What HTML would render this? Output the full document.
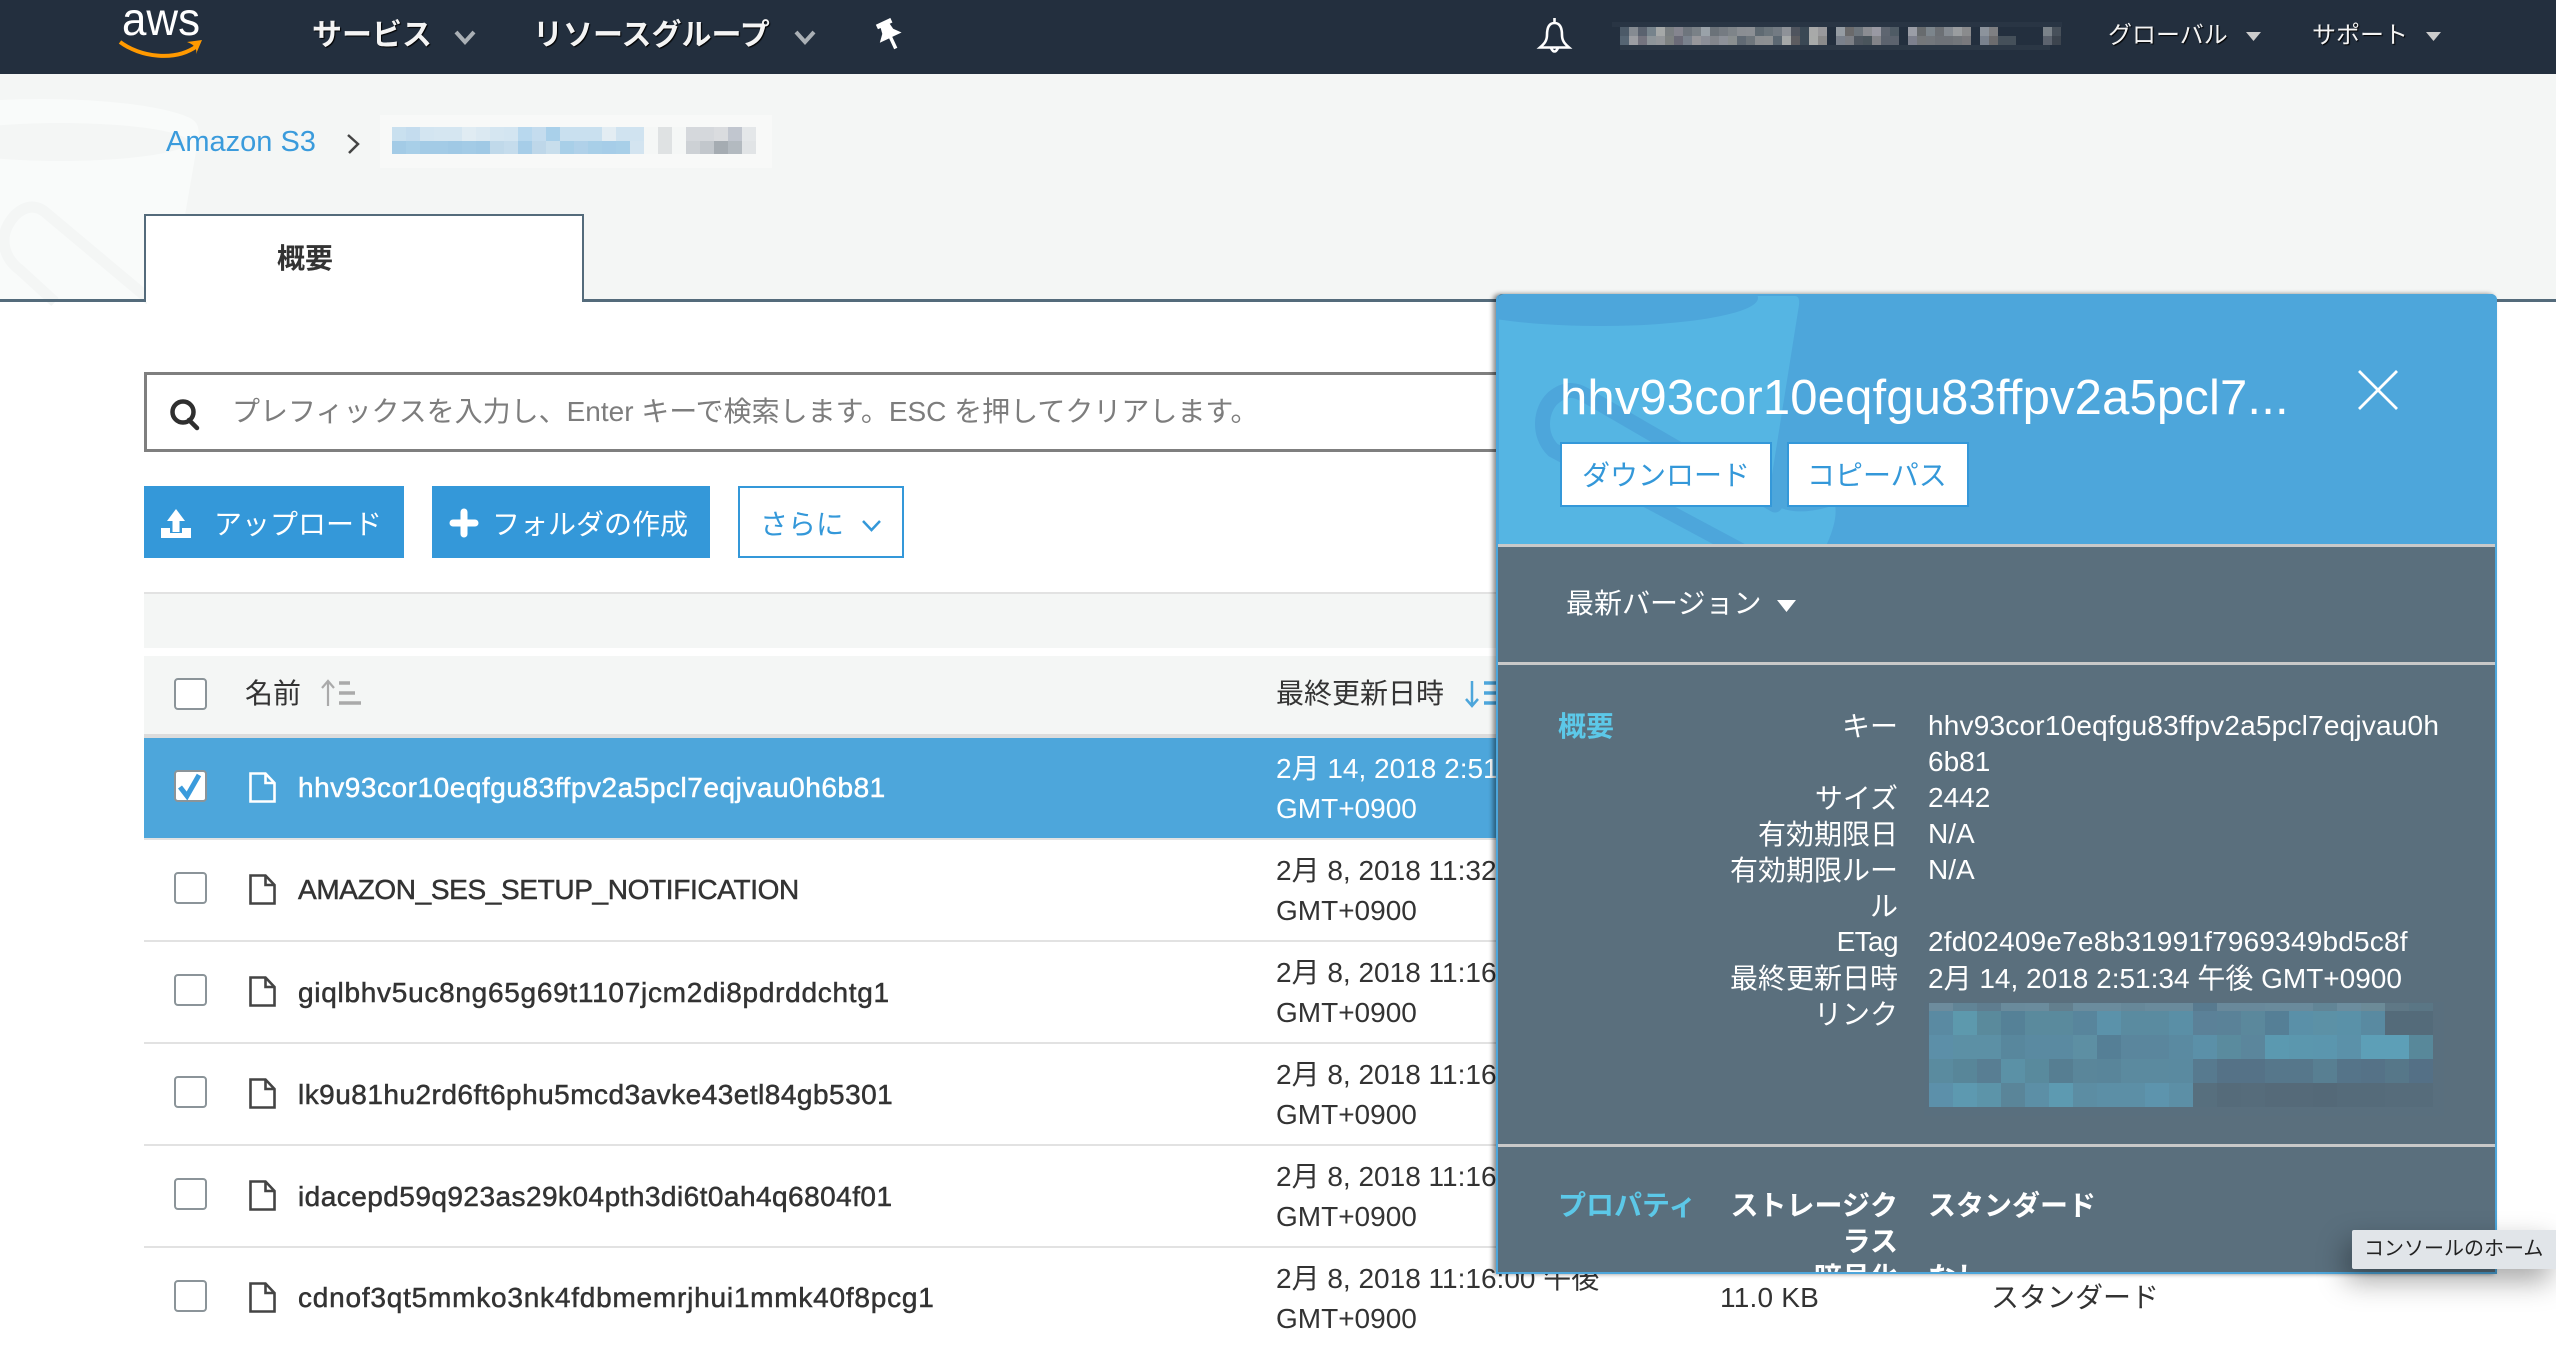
<!DOCTYPE html>
<html lang="ja"><head><meta charset="utf-8"><title>Amazon S3</title>
<style>
*{box-sizing:border-box}
html,body{margin:0;padding:0;width:2556px;height:1348px;overflow:hidden;background:#fff}
body{position:relative;font-family:"Liberation Sans","Noto Sans CJK JP",sans-serif;font-size:28px;color:#333}
.t{position:absolute;white-space:nowrap;line-height:40px;height:40px}
.b{position:absolute}
.nav{font-weight:700;font-size:30px;color:#f4f4f4;text-shadow:1px 1px 1px #000}
.nav2{font-size:24px;color:#f4f4f4;text-shadow:1px 1px 1px #000}
.fn{color:#333;-webkit-text-stroke:.5px #333}
.cb{position:absolute;left:174px;width:33px;height:32px;border:2.5px solid #8b9499;border-radius:4px;background:#fff}
.line{position:absolute;left:144px;width:1360px;height:2px;background:#e2e2e2}
.lb{position:absolute;right:658px;text-align:right;white-space:nowrap;line-height:40px;height:40px;color:#fff}
.v{position:absolute;left:1928px;white-space:nowrap;line-height:40px;height:40px;color:#fff}
.px{position:absolute;display:flex}
.px i{display:block;flex:none;height:100%}
.a i{width:9px}.l i{width:24px}.c i{width:14px}
svg{position:absolute;overflow:visible}
</style></head><body>

<!-- background bar -->
<div class="b" style="left:0;top:74px;width:2556px;height:228px;background:#f4f6f5"></div>
<svg style="left:0;top:0" width="600" height="302">
<path d="M0 100 C80 96 160 104 190 118 C200 123 199 132 198 140 L170 302 H0Z" fill="#f9fbfa"/>
<ellipse cx="60" cy="142" rx="128" ry="19" fill="#f4f6f5"/>
<path d="M150 300 L45 212 C30 200 15 212 8 225 C0 240 4 258 20 270 L55 302" fill="none" stroke="#f4f6f5" stroke-width="11"/>
</svg>

<!-- header -->
<div class="b" style="left:0;top:0;width:2556px;height:74px;background:#232f3e"></div>
<svg style="left:0;top:0" width="2556" height="74">
<text x="122" y="35" font-family="Liberation Sans" font-size="46" fill="#fff" textLength="78" lengthAdjust="spacingAndGlyphs">aws</text>
<path d="M120 42 C140 57 175 62 197 46" fill="none" stroke="#f90" stroke-width="4"/>
<path d="M187 42 L202 40 L196 54 Q198 46 187 42Z" fill="#f90"/>
<path d="M456 32 L465 42 L474 32" fill="none" stroke="#aab0b5" stroke-width="4"/>
<path d="M796 32 L805 42 L814 32" fill="none" stroke="#aab0b5" stroke-width="4"/>
<g transform="rotate(-25 889 34)"><path d="M881 20H897V25H894L895 31L901 38H877L883 31L884 25H881Z" fill="#fff"/><path d="M889 36V50" stroke="#fff" stroke-width="3.500"/></g>
<path d="M1554.5 23C1548.500 23 1547 29 1547 35C1547 41 1544 44 1540 47.500H1569C1565 44 1562 41 1562 35C1562 29 1560.500 23 1554.500 23ZM1554.500 18V23M1551 48Q1554.500 55 1558 48" fill="none" stroke="#fff" stroke-width="2.600"/>
<path d="M2246 32H2261L2253.500 41Z" fill="#ccc"/>
<path d="M2426 32H2441L2433.500 41Z" fill="#ccc"/>
</svg>
<div class="t nav" style="left:312px;top:16px">サービス</div>
<div class="t nav" style="left:533px;top:16px">リソースグループ</div>
<div class="t nav2" style="left:2108px;top:16px">グローバル</div>
<div class="t nav2" style="left:2312px;top:16px">サポート</div>

<!-- account blur -->
<div class="b" style="left:1612px;top:22px;width:450px;height:5px;background:#293544"></div>
<div class="b" style="left:1620px;top:45px;width:430px;height:5px;background:#2b3745"></div>
<div class="px a" style="left:1620px;top:27px;height:9px"><i style="background:#4c5a68"></i><i style="background:#858b92"></i><i style="background:#5a626f"></i><i style="background:#76838c"></i><i style="background:#a5a8a8"></i><i style="background:#7a7f82"></i><i style="background:#85858f"></i><i style="background:#6e757d"></i><i style="background:#7a8187"></i><i style="background:#9aa2a9"></i><i style="background:#6b7279"></i><i style="background:#757b82"></i><i style="background:#7e8489"></i><i style="background:#8a8e93"></i><i style="background:#8b8f94"></i><i style="background:#5f6a72"></i><i style="background:#6a747b"></i><i style="background:#737b83"></i><i style="background:#8e9298"></i><i style="background:#4f545e"></i><i style="background:#3a4854"></i><i style="background:#a8a9a9"></i><i style="background:#99999c"></i><i style="background:#232f3e"></i><i style="background:#959ca3"></i><i style="background:#6a6a6b"></i><i style="background:#6d757c"></i><i style="background:#8b8d92"></i><i style="background:#9999a3"></i><i style="background:#5e6570"></i><i style="background:#4f5b65"></i><i style="background:#232f3e"></i><i style="background:#9a9da6"></i><i style="background:#676b6e"></i><i style="background:#7c858c"></i><i style="background:#6c7075"></i><i style="background:#858b92"></i><i style="background:#9a9da0"></i><i style="background:#8a8b8d"></i><i style="background:#232f3e"></i><i style="background:#8c939c"></i><i style="background:#7e7f82"></i><i style="background:#232f3e;width:45px"></i><i style="background:#7a8289"></i><i style="background:#47505a"></i></div>
<div class="px a" style="left:1620px;top:36px;height:9px"><i style="background:#566573"></i><i style="background:#9c9ea3"></i><i style="background:#74747f"></i><i style="background:#8e959a"></i><i style="background:#94979b"></i><i style="background:#7e8282"></i><i style="background:#6b6b78"></i><i style="background:#7a828d"></i><i style="background:#97979b"></i><i style="background:#8b8e97"></i><i style="background:#83868c"></i><i style="background:#8d9199"></i><i style="background:#8a8f90"></i><i style="background:#606a74"></i><i style="background:#6e767c"></i><i style="background:#8c8f92"></i><i style="background:#8d9092"></i><i style="background:#5c6872"></i><i style="background:#a5a8a8"></i><i style="background:#5c5c60"></i><i style="background:#3a4854"></i><i style="background:#a8aaa9"></i><i style="background:#8b8b8b"></i><i style="background:#232f3e"></i><i style="background:#7a818c"></i><i style="background:#7c7f85"></i><i style="background:#4f5760"></i><i style="background:#4a555c"></i><i style="background:#838489"></i><i style="background:#5c636e"></i><i style="background:#5c636e"></i><i style="background:#232f3e"></i><i style="background:#7d808d"></i><i style="background:#74777a"></i><i style="background:#73777c"></i><i style="background:#6e7278"></i><i style="background:#6e7278"></i><i style="background:#72767b"></i><i style="background:#79797d"></i><i style="background:#232f3e"></i><i style="background:#7a828e"></i><i style="background:#6c6c6e"></i><i style="background:#45505a"></i><i style="background:#45505a"></i><i style="background:#232f3e;width:27px"></i><i style="background:#5c636e"></i><i style="background:#3c444e"></i></div>

<!-- breadcrumb -->
<div class="t" style="left:166px;top:122px;color:#3a9bdc;font-size:29px">Amazon S3</div>
<svg style="left:0;top:0" width="10" height="10"><path d="M348 135L358 144L349 153" fill="none" stroke="#444" stroke-width="2.500"/></svg>
<div class="b" style="left:380px;top:115px;width:392px;height:53px;background:#f8f9f8"></div>
<div class="px c" style="left:392px;top:127px;height:14px"><i style="background:#c9e0ef"></i><i style="background:#c4dcee"></i><i style="background:#d3e5f1"></i><i style="background:#d5e6f1"></i><i style="background:#d5e6f1"></i><i style="background:#e0ecf3"></i><i style="background:#dbe9f2"></i><i style="background:#d5e6f1"></i><i style="background:#d3e5f1"></i><i style="background:#b8d8ee"></i><i style="background:#c4dcee"></i><i style="background:#a9d0ea"></i><i style="background:#c9e0ef"></i><i style="background:#c9e0ef"></i><i style="background:#c9e0ef"></i><i style="background:#e3edf3"></i><i style="background:#d0e3f0"></i><i style="background:#d0e3f0"></i><i style="background:#f5f7f6"></i><i style="background:#dfe2e3"></i><i style="background:#f5f7f6"></i><i style="background:#d5d8dc"></i><i style="background:#d5d8dc"></i><i style="background:#dadcdf"></i><i style="background:#c1c6cf"></i><i style="background:#e4e7e9"></i></div>
<div class="px c" style="left:392px;top:141px;height:13px"><i style="background:#a3cbe6"></i><i style="background:#a8cfe8"></i><i style="background:#a3cbe6"></i><i style="background:#a3cbe6"></i><i style="background:#a0c9e5"></i><i style="background:#a3cbe6"></i><i style="background:#a0c9e5"></i><i style="background:#c0d9ea"></i><i style="background:#c5dcec"></i><i style="background:#a6cde8"></i><i style="background:#bed7e9"></i><i style="background:#c8deec"></i><i style="background:#a8cfe8"></i><i style="background:#b0d1e9"></i><i style="background:#a8cfe8"></i><i style="background:#a6cde8"></i><i style="background:#a8cfe8"></i><i style="background:#d3e4f0"></i><i style="background:#f5f7f6"></i><i style="background:#dfe2e3"></i><i style="background:#f5f7f6"></i><i style="background:#cdd1d5"></i><i style="background:#c2c7cc"></i><i style="background:#a5acb2"></i><i style="background:#b3bac0"></i><i style="background:#e1e4e6"></i></div>

<!-- tab -->
<div class="b" style="left:0;top:299px;width:2556px;height:3px;background:#546b7b"></div>
<div class="b" style="left:144px;top:214px;width:440px;height:88px;background:#fff;border:2.500px solid #546b7b;border-bottom:0"></div>
<div class="b" style="left:147px;top:299px;width:434px;height:5px;background:#fff"></div>
<div class="t" style="left:277px;top:239px;font-weight:700;color:#333">概要</div>

<!-- search -->
<div class="b" style="left:144px;top:372px;width:1400px;height:80px;border:3px solid #7f7f7f;background:#fff"></div>
<svg style="left:0;top:0" width="10" height="10"><circle cx="183" cy="412" r="10.500" fill="none" stroke="#2f2f2f" stroke-width="4.500"/><path d="M189 420L197 428" stroke="#2f2f2f" stroke-width="4.500" stroke-linecap="round"/></svg>
<div class="t" style="left:232px;top:392px;color:#7d7d7d;font-size:28px">プレフィックスを入力し、Enter キーで検索します。ESC を押してクリアします。</div>

<!-- buttons -->
<div class="b" style="left:144px;top:486px;width:260px;height:72px;background:#3498d9"></div>
<div class="b" style="left:432px;top:486px;width:278px;height:72px;background:#3498d9"></div>
<div class="b" style="left:738px;top:486px;width:166px;height:72px;background:#fff;border:2.500px solid #3498d9"></div>
<svg style="left:0;top:0" width="10" height="10">
<path d="M176 509L185 521H179.500V532H172.500V521H167Z" fill="#fff"/>
<path d="M161 528H170V533H182V528H191V538H161Z" fill="#fff"/>
<path d="M464 512V534M453 523H475" stroke="#fff" stroke-width="7" stroke-linecap="round"/>
<path d="M863 521L871.500 530L880 521" fill="none" stroke="#3498d9" stroke-width="2.500"/>
</svg>
<div class="t" style="left:214px;top:505px;color:#fff">アップロード</div>
<div class="t" style="left:492px;top:505px;color:#fff">フォルダの作成</div>
<div class="t" style="left:760px;top:505px;color:#3498d9">さらに</div>

<!-- table -->
<div class="b" style="left:144px;top:592px;width:1360px;height:56px;background:#f4f6f5;border-top:2px solid #e2e2e2"></div>
<div class="b" style="left:144px;top:656px;width:1360px;height:78px;background:#f4f6f5"></div>
<div class="b" style="left:144px;top:734px;width:1360px;height:4px;background:#dcdcdc"></div>
<div class="b" style="left:144px;top:738px;width:1360px;height:100px;background:#4da6db"></div>
<div class="line" style="top:838px"></div><div class="line" style="top:940px"></div><div class="line" style="top:1042px"></div><div class="line" style="top:1144px"></div><div class="line" style="top:1246px"></div>

<div class="cb" style="top:678px"></div>
<div class="t" style="left:245px;top:674px">名前</div>
<svg style="left:0;top:0" width="10" height="10">
<path d="M328 706V682M322 688L328 681L334 688" fill="none" stroke="#aaa" stroke-width="2.200"/>
<path d="M339 683H350M339 693H355M339 703H361" stroke="#aaa" stroke-width="3.500"/>
<path d="M1472 681V705M1466 699L1472 706L1478 699" fill="none" stroke="#4da6db" stroke-width="2.500"/>
<path d="M1484 683H1496M1484 693H1496M1484 703H1496" stroke="#4da6db" stroke-width="3.500"/>
</svg>
<div class="t" style="left:1276px;top:674px">最終更新日時</div>

<svg width="0" height="0" style="left:0;top:0"><defs><path id="f" d="M1.500 1.500H16.500L25.500 11V29.500H1.500ZM16.500 1.500V11H25.500" fill="none" stroke-width="2.600"/></defs></svg>

<div class="cb" style="top:770px;background:#fff"></div>
<svg style="left:0;top:0" width="10" height="10"><path d="M180 787L187 796L199 775" fill="none" stroke="#3a9bdc" stroke-width="5"/></svg>
<svg style="left:249px;top:772px" width="27" height="32" stroke="#fff"><use href="#f"/></svg>
<div class="t" style="left:298px;top:768px;color:#fff;letter-spacing:.54px;-webkit-text-stroke:.5px #fff">hhv93cor10eqfgu83ffpv2a5pcl7eqjvau0h6b81</div>
<div class="t" style="left:1276px;top:749px;color:#fff">2月 14, 2018 2:51:34 午後</div>
<div class="t" style="left:1276px;top:789px;color:#fff">GMT+0900</div>

<div class="cb" style="top:872px"></div>
<svg style="left:249px;top:874px" width="27" height="32" stroke="#444"><use href="#f"/></svg>
<div class="t fn" style="left:298px;top:870px;letter-spacing:-.36px">AMAZON_SES_SETUP_NOTIFICATION</div>
<div class="t" style="left:1276px;top:851px">2月 8, 2018 11:32:00 午後</div>
<div class="t" style="left:1276px;top:891px">GMT+0900</div>

<div class="cb" style="top:974px"></div>
<svg style="left:249px;top:976px" width="27" height="32" stroke="#444"><use href="#f"/></svg>
<div class="t fn" style="left:298px;top:973px;letter-spacing:.72px">giqlbhv5uc8ng65g69t1107jcm2di8pdrddchtg1</div>
<div class="t" style="left:1276px;top:953px">2月 8, 2018 11:16:00 午後</div>
<div class="t" style="left:1276px;top:993px">GMT+0900</div>

<div class="cb" style="top:1076px"></div>
<svg style="left:249px;top:1078px" width="27" height="32" stroke="#444"><use href="#f"/></svg>
<div class="t fn" style="left:298px;top:1075px;letter-spacing:.48px">lk9u81hu2rd6ft6phu5mcd3avke43etl84gb5301</div>
<div class="t" style="left:1276px;top:1055px">2月 8, 2018 11:16:00 午後</div>
<div class="t" style="left:1276px;top:1095px">GMT+0900</div>

<div class="cb" style="top:1178px"></div>
<svg style="left:249px;top:1180px" width="27" height="32" stroke="#444"><use href="#f"/></svg>
<div class="t fn" style="left:298px;top:1177px;letter-spacing:.46px">idacepd59q923as29k04pth3di6t0ah4q6804f01</div>
<div class="t" style="left:1276px;top:1157px">2月 8, 2018 11:16:00 午後</div>
<div class="t" style="left:1276px;top:1197px">GMT+0900</div>

<div class="cb" style="top:1280px"></div>
<svg style="left:249px;top:1282px" width="27" height="32" stroke="#444"><use href="#f"/></svg>
<div class="t fn" style="left:298px;top:1278px;letter-spacing:.78px">cdnof3qt5mmko3nk4fdbmemrjhui1mmk40f8pcg1</div>
<div class="t" style="left:1276px;top:1259px">2月 8, 2018 11:16:00 午後</div>
<div class="t" style="left:1276px;top:1299px">GMT+0900</div>
<div class="t" style="left:1720px;top:1278px;letter-spacing:.2px">11.0 KB</div>
<div class="t" style="left:1991px;top:1278px">スタンダード</div>

<!-- panel -->
<div class="b" style="left:1496px;top:294px;width:1001px;height:980px;background:#5a6f7d;border:2.500px solid #4da6db;border-top:0;border-radius:6px 6px 0 0;box-shadow:-3px 0 5px rgba(0,0,0,.45);overflow:hidden"></div>
<div class="b" style="left:1498px;top:294px;width:999px;height:250px;background:#4da6db;border-radius:6px 6px 0 0;overflow:hidden"></div>
<svg style="left:0;top:0" width="10" height="10">
<defs><clipPath id="pc"><rect x="1499" y="296" width="998" height="248"/></clipPath></defs>
<g clip-path="url(#pc)">
<path d="M1499 296H1795Q1800 296 1799 305L1768 500Q1790 520 1835 505Q1838 520 1826 546H1499Z" fill="#55b5e3"/>
<ellipse cx="1600" cy="298" rx="158" ry="28" fill="#4da6db"/>
<path d="M1775 505L1585 395C1570 386 1560 392 1553 398C1540 410 1538 435 1553 450L1740 550" fill="none" stroke="#4da6db" stroke-width="15" stroke-linecap="round"/>
</g>
<path d="M2359 371L2397 409M2397 371L2359 409" stroke="#fff" stroke-width="2.800"/>
</svg>
<div class="t" style="left:1560px;top:370px;height:56px;line-height:56px;color:#fff;font-size:49px;letter-spacing:.16px">hhv93cor10eqfgu83ffpv2a5pcl7...</div>
<div class="b" style="left:1560px;top:442px;width:212px;height:65px;background:#fff;border:2px solid #3498d9"></div>
<div class="b" style="left:1787px;top:442px;width:182px;height:65px;background:#fff;border:2px solid #3498d9"></div>
<div class="t" style="left:1582px;top:456px;color:#3498d9">ダウンロード</div>
<div class="t" style="left:1807px;top:456px;color:#3498d9">コピーパス</div>

<div class="b" style="left:1498px;top:544px;width:997px;height:3px;background:#c9c9c9"></div>
<div class="t" style="left:1566px;top:584px;color:#fff;font-size:28px">最新バージョン</div>
<svg style="left:0;top:0" width="10" height="10"><path d="M1777 600H1796L1786.500 612Z" fill="#fff"/></svg>
<div class="b" style="left:1498px;top:662px;width:997px;height:3px;background:#c9c9c9"></div>

<div class="t" style="left:1558px;top:707px;color:#5cc8e8;font-weight:700">概要</div>
<div class="lb" style="top:707px">キー</div><div class="v" style="top:706px;letter-spacing:.2px">hhv93cor10eqfgu83ffpv2a5pcl7eqjvau0h</div>
<div class="v" style="top:742px">6b81</div>
<div class="lb" style="top:779px">サイズ</div><div class="v" style="top:778px">2442</div>
<div class="lb" style="top:815px">有効期限日</div><div class="v" style="top:814px">N/A</div>
<div class="lb" style="top:851px">有効期限ルー</div><div class="v" style="top:850px">N/A</div>
<div class="lb" style="top:887px">ル</div>
<div class="lb" style="top:922px;letter-spacing:-.6px">ETag</div><div class="v" style="top:922px;letter-spacing:.2px">2fd02409e7e8b31991f7969349bd5c8f</div>
<div class="lb" style="top:959px">最終更新日時</div><div class="v" style="top:959px">2月 14, 2018 2:51:34 午後 GMT+0900</div>
<div class="lb" style="top:995px">リンク</div>

<!-- link blur -->
<div class="b" style="left:1924px;top:1002px;width:520px;height:114px;background:#596f7e"></div>
<div class="px l" style="left:1929px;top:1003px;height:8px"><i style="background:#6d8c9d"></i><i style="background:#618496"></i><i style="background:#5f7d8f"></i><i style="background:#6a8b9c"></i><i style="background:#6b8c9d"></i><i style="background:#637f8e"></i><i style="background:#6b8c9d"></i><i style="background:#6b8c9d"></i><i style="background:#678899"></i><i style="background:#6a8b9c"></i><i style="background:#6a8b9c"></i><i style="background:#587a8f"></i><i style="background:#69899b"></i><i style="background:#69899b"></i><i style="background:#6a8b9c"></i><i style="background:#6a8b9c"></i><i style="background:#628596"></i><i style="background:#6c8d9e"></i><i style="background:#6c8b98"></i><i style="background:#5f7886"></i><i style="background:#5a7685"></i></div>
<div class="px l" style="left:1929px;top:1011px;height:24px"><i style="background:#5a8aa2"></i><i style="background:#5d99ad"></i><i style="background:#5a8a9c"></i><i style="background:#558197"></i><i style="background:#5a8a9d"></i><i style="background:#5a8a9d"></i><i style="background:#58859c"></i><i style="background:#5b92aa"></i><i style="background:#5a8ba0"></i><i style="background:#5a8ba0"></i><i style="background:#5a8fa6"></i><i style="background:#5b8198"></i><i style="background:#5a8298"></i><i style="background:#5b889c"></i><i style="background:#557f96"></i><i style="background:#5a90a8"></i><i style="background:#5c91a6"></i><i style="background:#5a91a8"></i><i style="background:#598aa1"></i><i style="background:#546b7a"></i><i style="background:#546b7a"></i></div>
<div class="px l" style="left:1929px;top:1035px;height:24px"><i style="background:#5c8fa8"></i><i style="background:#5c90a5"></i><i style="background:#5c90a5"></i><i style="background:#58879d"></i><i style="background:#5a8aa1"></i><i style="background:#5a8aa1"></i><i style="background:#5d8fa3"></i><i style="background:#557f96"></i><i style="background:#5a869d"></i><i style="background:#5a869d"></i><i style="background:#5a8aa1"></i><i style="background:#5b90a8"></i><i style="background:#5a8b9e"></i><i style="background:#5b869c"></i><i style="background:#5b99b0"></i><i style="background:#5b97ae"></i><i style="background:#5b96ae"></i><i style="background:#5b91a9"></i><i style="background:#5d9fb7"></i><i style="background:#5d9fb7"></i><i style="background:#58889a"></i></div>
<div class="px l" style="left:1929px;top:1059px;height:24px"><i style="background:#5a8b9f"></i><i style="background:#588699"></i><i style="background:#587e93"></i><i style="background:#5b91a6"></i><i style="background:#598a9d"></i><i style="background:#567e92"></i><i style="background:#5a869a"></i><i style="background:#59859a"></i><i style="background:#5b8a9f"></i><i style="background:#5b8a9f"></i><i style="background:#5a8aa0"></i><i style="background:#577a8f"></i><i style="background:#557287"></i><i style="background:#557287"></i><i style="background:#56778b"></i><i style="background:#56778b"></i><i style="background:#587f92"></i><i style="background:#557489"></i><i style="background:#557287"></i><i style="background:#567789"></i><i style="background:#547086"></i></div>
<div class="px l" style="left:1929px;top:1083px;height:24px"><i style="background:#5c90aa"></i><i style="background:#5d99b0"></i><i style="background:#5c94a9"></i><i style="background:#5a8599"></i><i style="background:#5c8fa6"></i><i style="background:#5d9ab1"></i><i style="background:#5c8da3"></i><i style="background:#5c8fa6"></i><i style="background:#5c8fa6"></i><i style="background:#5d94ad"></i><i style="background:#5c8fa6"></i><i style="background:#576f7e"></i><i style="background:#556b7a"></i><i style="background:#566c7b"></i><i style="background:#556a79"></i><i style="background:#556a79"></i><i style="background:#546978"></i><i style="background:#556b7a"></i><i style="background:#556b7a"></i><i style="background:#566c7b"></i><i style="background:#566c7b"></i></div>

<div class="b" style="left:1498px;top:1144px;width:997px;height:3px;background:#c9c9c9"></div>
<div class="b" style="left:1498px;top:1147px;width:997px;height:125px;overflow:hidden">
<div class="t" style="left:60px;top:39px;color:#5cc8e8;font-weight:700">プロパティ</div>
<div class="lb" style="right:auto;left:0;width:400px;top:39px;font-weight:700">ストレージク</div><div class="v" style="left:430px;top:39px;font-weight:700">スタンダード</div>
<div class="lb" style="right:auto;left:0;width:400px;top:75px;font-weight:700">ラス</div>
<div class="lb" style="right:auto;left:0;width:400px;top:111px;font-weight:700">暗号化</div><div class="v" style="left:430px;top:111px;font-weight:700">なし</div>
</div>

<!-- tooltip -->
<div class="b" style="left:2352px;top:1230px;width:204px;height:39px;background:#e1e5e9;box-shadow:-6px 12px 28px rgba(0,0,0,.35);border-radius:2px 0 0 2px"></div>
<div class="t" style="left:2364px;top:1229px;font-size:20px;color:#222">コンソールのホーム</div>
</body></html>
